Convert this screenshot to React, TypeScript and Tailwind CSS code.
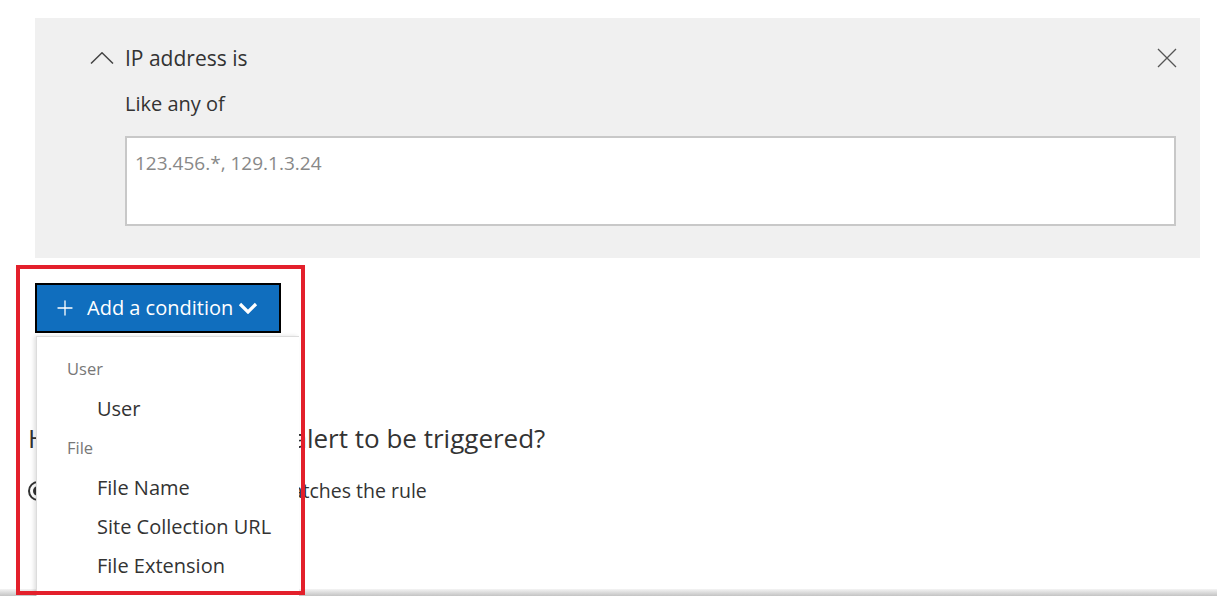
import { Plus } from "lucide-react";

const font = { fontFamily: '"Open Sans", "Noto Sans", sans-serif' };

function ConditionCard() {
  return (
    <div className="ml-[35px] mt-[18px] h-[240px] w-[1165px] bg-[#f0f0f0] pt-[28px]">
      {/* Header */}
      <div className="flex items-center pl-[55px] pr-[23px]">
        <svg viewBox="0 0 24 12" className="h-[12px] w-[24px]" fill="none" stroke="#444" strokeWidth={1.5}>
          <path d="M1 11.5 L12 0.8 L23 11.5" />
        </svg>
        <span className="ml-[11px] text-[21px] leading-[24px] text-[#333]">IP address is</span>
        <svg viewBox="0 0 20 20" className="ml-auto h-[20px] w-[20px]" fill="none" stroke="#555" strokeWidth={1.3}>
          <path d="M1 1 L19 19 M19 1 L1 19" />
        </svg>
      </div>
      <div className="pl-[90px]">
        <div className="mt-[22px] text-[20px] leading-[24px] text-[#333]">Like any of</div>
        <div className="mt-[20px] h-[90px] w-[1051px] border-2 border-[#c8c8c8] bg-white px-[8px] pt-[13px] text-[19px] leading-[24px] text-[#888]">
          123.456.*, 129.1.3.24
        </div>
      </div>
    </div>
  );
}

function Dropdown() {
  const itemClass = "h-[39px] pl-[60px] text-[20px] leading-[39px] text-[#333]";
  const headClass = "h-[40px] pl-[30px] text-[16.5px] leading-[40px] text-[#777]";
  return (
    <div className="absolute left-[36px] top-[336px] h-[262px] w-[263px] border-t border-l border-[#dcdcdc] bg-white pt-[12px] shadow-[-2px_0_4px_rgba(0,0,0,0.12)]">
      <div className={headClass}>User</div>
      <div className={itemClass}>User</div>
      <div className={headClass}>File</div>
      <div className={itemClass}>File Name</div>
      <div className={itemClass}>Site Collection URL</div>
      <div className={itemClass}>File Extension</div>
    </div>
  );
}

export default function App() {
  return (
    <div className="relative h-[596px] w-[1217px] overflow-hidden bg-white" style={font}>
      <ConditionCard />

      {/* Add condition button */}
      <div className="ml-[35px] mt-[25px] flex h-[50px] w-[246px] items-center border-2 border-black bg-[#106ebe] pl-[16px] text-white">
        <Plus className="h-[24px] w-[24px]" strokeWidth={1.3} />
        <span className="ml-[10px] text-[20px] leading-[24px]">Add a condition</span>
        <svg viewBox="0 0 20 12" className="ml-[5px] h-[12px] w-[20px]" fill="none" stroke="white" strokeWidth={3.2}>
          <path d="M2 2 L10 10 L18 2" />
        </svg>
      </div>

      {/* Alert trigger section, partly under the menu */}
      <div className="ml-[28px] mt-[89px] text-[26px] leading-[32px] text-[#333]">
        How do you want the alert to be triggered?
      </div>
      <div className="ml-[28px] mt-[24px] flex items-center text-[19.5px] leading-[26px] text-[#333]">
        <span className="flex h-[20px] w-[20px] items-center justify-center rounded-full border-2 border-[#333]">
          <span className="h-[10px] w-[10px] rounded-full bg-[#333]" />
        </span>
        <span className="ml-[29px]">Every time an activity matches the rule</span>
      </div>

      {/* Bottom bar shadow */}
      <div className="absolute bottom-0 left-0 h-[7px] w-full bg-gradient-to-b from-[#f4f4f4] to-[#c4c4c4]" />

      <Dropdown />

      {/* Highlight box */}
      <div className="absolute left-[16px] top-[265px] h-[330px] w-[289px] border-4 border-[#e3202b]" />
    </div>
  );
}
